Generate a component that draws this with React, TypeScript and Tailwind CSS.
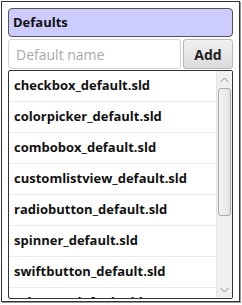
import React from 'react';

const files = [
  'checkbox_default.sld',
  'colorpicker_default.sld',
  'combobox_default.sld',
  'customlistview_default.sld',
  'radiobutton_default.sld',
  'spinner_default.sld',
  'swiftbutton_default.sld',
  'tabpane_default.sld',
];

function ScrollBar() {
  return (
    <div className="w-[16px] shrink-0 flex flex-col bg-[#f0f0f0] border-l border-[#e6e6e6]">
      <div className="h-[17px] flex items-center justify-center">
        <svg width="9" height="6" viewBox="0 0 9 6">
          <path d="M0.5 5 L4.5 1 L8.5 5" fill="none" stroke="#8a8a8a" strokeWidth="1" />
        </svg>
      </div>
      <div className="mx-[1px] h-[128px] rounded-[3px] border border-[#a8a8a8] bg-gradient-to-r from-[#f4f4f4] to-[#e2e2e2]" />
      <div className="flex-1" />
      <div className="h-[17px] flex items-center justify-center">
        <svg width="9" height="6" viewBox="0 0 9 6">
          <path d="M0.5 1 L4.5 5 L8.5 1" fill="none" stroke="#8a8a8a" strokeWidth="1" />
        </svg>
      </div>
    </div>
  );
}

export default function App() {
  return (
    <div className="w-[242px] h-[305px] bg-white pt-px pl-px" style={{ fontFamily: '"Open Sans", "Noto Sans", sans-serif' }}>
      <div className="w-[239px] h-[301px] border border-[#333] shadow-[1px_1px_0_#999] flex flex-col pt-[6px] pl-[6px] pr-[6px] pb-[2px]">
        <div className="h-[29px] mb-[2px] rounded-[4px] border border-[#555] bg-[#ccccff] flex items-center pl-[4px]">
          <span className="text-[13px] font-bold text-[#111]">Defaults</span>
        </div>
        <div className="flex gap-[2px] h-[30px] mb-[1px]">
          <div className="flex-1 rounded-[3px] border border-[#d4d4d4] bg-white flex items-center pl-[7px]">
            <span className="text-[14px] text-[#aaa]">Default name</span>
          </div>
          <div className="w-[50px] rounded-[3px] border border-[#b8b8b8] bg-gradient-to-b from-[#f0f0f0] to-[#dcdcdc] flex items-center justify-center">
            <span className="text-[14px] font-bold text-[#222]">Add</span>
          </div>
        </div>
        <div className="flex-1 min-h-0 flex border border-[#333] rounded-[2px] overflow-hidden">
          <div className="flex-1 min-w-0 overflow-hidden">
            {files.map((f) => (
              <div key={f} className="h-[31px] border-b border-[#ececec] flex items-center pl-[5px]">
                <span className="text-[13px] font-bold text-[#111] whitespace-nowrap">{f}</span>
              </div>
            ))}
          </div>
          <ScrollBar />
        </div>
      </div>
    </div>
  );
}
